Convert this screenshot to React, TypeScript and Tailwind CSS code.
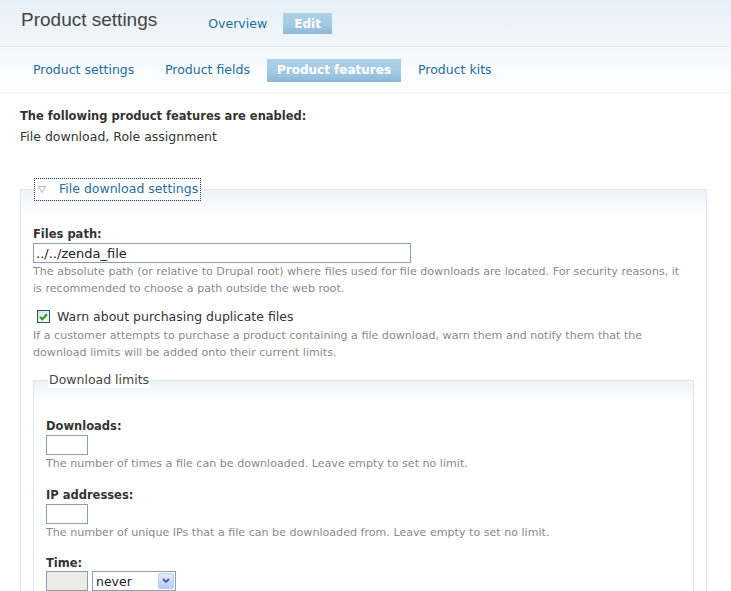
import React from 'react';

const verdana = { fontFamily: '"DejaVu Sans", Verdana, sans-serif' };

function Tab({ label, active, className = '' }: { label: string; active?: boolean; className?: string }) {
  if (active) {
    return (
      <span className={`inline-flex h-[23px] items-center justify-center bg-gradient-to-b from-[#acd0e8] via-[#a6cbe5] to-[#8db8d9] text-[12px] font-bold text-white ${className}`}>
        {label}
      </span>
    );
  }
  return <span className={`inline-flex h-[23px] items-center text-[12.5px] text-[#1f6d9e] ${className}`}>{label}</span>;
}

function Description({ children }: { children: React.ReactNode }) {
  return <p className="text-[11.1px] leading-[17px] text-[#8a8a8a]">{children}</p>;
}

function Label({ children }: { children: React.ReactNode }) {
  return <div className="text-[11.5px] font-bold leading-[15px] text-[#333]">{children}</div>;
}

export default function App() {
  return (
    <div className="h-[591px] w-[731px] overflow-hidden bg-white text-[#333]" style={verdana}>
      {/* title bar */}
      <div className="flex h-[47px] items-start border-b border-[#e4ebf0] bg-gradient-to-b from-[#e7f0f8] to-[#f1f6fa] pl-[21px]">
        <h1 className="pt-[10px] text-[19px] leading-none text-[#444]" style={{ fontFamily: '"Liberation Sans", Arial, sans-serif' }}>
          Product settings
        </h1>
        <div className="ml-[51px] mt-[13px] flex items-center gap-[16px]">
          <span className="text-[12.5px] leading-[21px] text-[#1f6d9e]">Overview</span>
          <span className="inline-flex h-[21px] w-[49px] items-center justify-center bg-gradient-to-b from-[#acd0e8] via-[#a6cbe5] to-[#8db8d9] text-[12px] font-bold text-white">
            Edit
          </span>
        </div>
      </div>

      {/* secondary tabs */}
      <div className="flex h-[46px] items-center border-b border-[#e7ebee] bg-gradient-to-b from-[#f3f8fc] to-white pl-[33px] pt-[1px]">
        <Tab label="Product settings" className="w-[132px]" />
        <Tab label="Product fields" className="w-[102px]" />
        <Tab label="Product features" active className="w-[134px]" />
        <Tab label="Product kits" className="ml-[17px]" />
      </div>

      <div className="px-[20px] pt-[16px]">
        <div className="text-[11.5px] font-bold leading-[15px] text-[#333]">The following product features are enabled:</div>
        <div className="mt-[5px] text-[12.5px] leading-[15px] text-[#333]">File download, Role assignment</div>

        {/* fieldset */}
        <div className="relative mt-[45px] w-[687px] border border-[#dfe8f1] bg-gradient-to-b from-[#ebf2f9] via-white to-white bg-[length:100%_50px] bg-no-repeat pb-[40px] pl-[12px] pr-[23px] pt-[37px]">
          <div className="absolute -top-[12px] left-[13px] flex h-[23px] items-center gap-[13px] border border-dotted border-[#233a52] bg-white pl-[3px] pr-[2px] text-[12.5px] text-[#1f6d9e]">
            <svg width="8" height="7" viewBox="0 0 8 7">
              <path d="M0.5 0.5 L7.5 0.5 L4 6.5 Z" fill="none" stroke="#b3b9bf" strokeWidth="1" />
            </svg>
            File download settings
          </div>

          <Label>Files path:</Label>
          <input
            readOnly
            value="../../zenda_file"
            className="mt-[1px] block h-[20px] w-[378px] border border-[#8aa0b0] px-[2px] text-[13px] text-[#222] outline-none"
            style={verdana}
          />
          <Description>
            The absolute path (or relative to Drupal root) where files used for file downloads are located. For security reasons, it is recommended to choose a path outside the web root.
          </Description>

          <label className="mt-[12px] flex items-center gap-[7px] pl-[4px] text-[12.5px] leading-[15px] text-[#333]">
            <span className="flex h-[13px] w-[13px] items-center justify-center border border-[#1c5180] bg-gradient-to-br from-[#dcdcd7] to-white">
              <svg width="9" height="8" viewBox="0 0 9 8">
                <path d="M1 4 L3.3 6.3 L8 1.2" fill="none" stroke="#21a121" strokeWidth="2" />
              </svg>
            </span>
            Warn about purchasing duplicate files
          </label>
          <div className="mt-[3px]">
            <Description>
              If a customer attempts to purchase a product containing a file download, warn them and notify them that the download limits will be added onto their current limits.
            </Description>
          </div>

          {/* nested fieldset */}
          <div className="relative mt-[19px] w-[661px] border border-[#dfe8f1] bg-gradient-to-b from-[#ebf2f9] via-white to-white bg-[length:100%_42px] bg-no-repeat pl-[12px] pt-[38px]">
            <div className="absolute -top-[9px] left-[14px] bg-white px-[1px] text-[12.5px] leading-[16px] text-[#444]">
              Download limits
            </div>

            <Label>Downloads:</Label>
            <div className="mt-[1px] h-[20px] w-[42px] border border-[#8aa0b0] bg-white" />
            <Description>The number of times a file can be downloaded. Leave empty to set no limit.</Description>

            <div className="mt-[16px]">
              <Label>IP addresses:</Label>
            </div>
            <div className="mt-[1px] h-[20px] w-[42px] border border-[#8aa0b0] bg-white" />
            <Description>The number of unique IPs that a file can be downloaded from. Leave empty to set no limit.</Description>

            <div className="mt-[15px]">
              <Label>Time:</Label>
            </div>
            <div className="mt-[0px] flex items-center gap-[4px]">
              <div className="h-[20px] w-[42px] border border-[#8aa0b0] bg-[#ecebe5]" />
              <div className="flex h-[20px] w-[84px] items-center justify-between border border-[#8aa0b0] bg-white pl-[3px] pr-[1px] text-[12.5px] leading-[15px] text-[#222]">
                never
                <span className="flex h-[16px] w-[16px] items-center justify-center rounded-[2px] border border-[#b9cdf6] bg-gradient-to-b from-[#e0ebff] to-[#b6ccf6]">
                  <svg width="8" height="6" viewBox="0 0 8 6">
                    <path d="M1 1 L4 4 L7 1" fill="none" stroke="#4d6185" strokeWidth="1.8" />
                  </svg>
                </span>
              </div>
            </div>
          </div>
        </div>
      </div>
    </div>
  );
}
